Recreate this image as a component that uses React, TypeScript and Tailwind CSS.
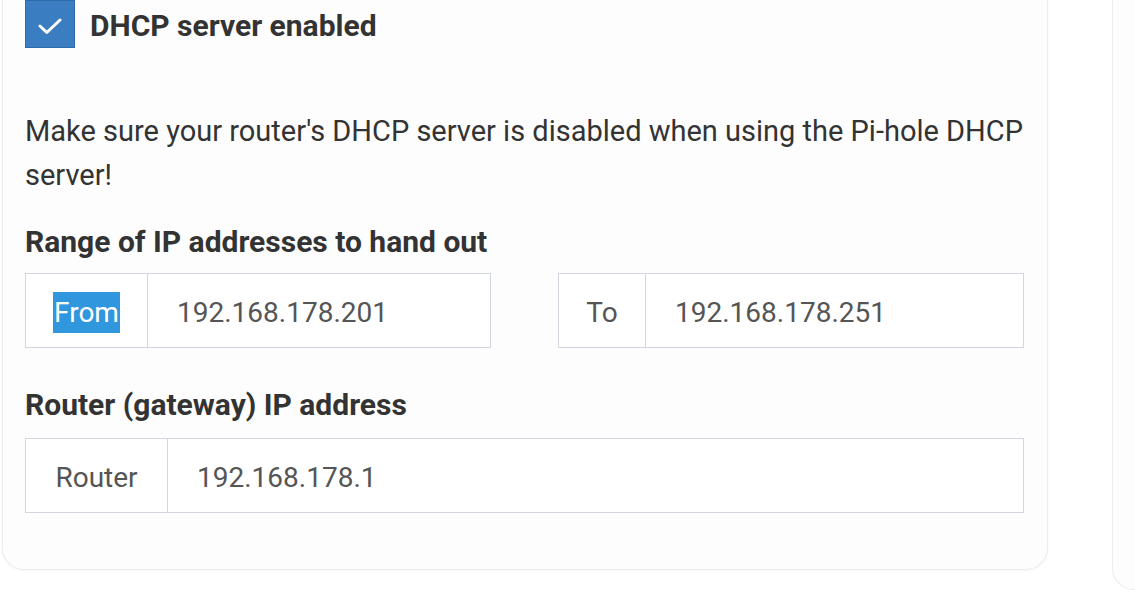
import type { ReactNode } from 'react';

const font = { fontFamily: '"Source Sans Pro", Roboto, "Noto Sans", sans-serif' };

type InputGroupProps = {
  addon: ReactNode;
  addonWidth: string;
  value: string;
  className?: string;
};

function InputGroup({ addon, addonWidth, value, className = '' }: InputGroupProps) {
  return (
    <div className={`flex h-[75px] border border-[#d2d6de] bg-white ${className}`}>
      <span className={`flex shrink-0 items-center justify-center border-r border-[#d2d6de] pt-[4px] text-[28px] text-[#555] ${addonWidth}`}>
        {addon}
      </span>
      <span className="flex flex-1 items-center pl-[29px] pt-[4px] text-[28px] text-[#555]">{value}</span>
    </div>
  );
}

export default function App() {
  return (
    <div className="flex h-[612px] w-[1135px] overflow-hidden bg-white" style={font}>
      <div className="ml-[2px] h-[570px] w-[1046px] shrink-0 rounded-b-[22px] border-x border-b border-[#ececec] bg-[#fdfdfd] pl-[22px] pr-[23px] shadow-[0_1px_3px_rgba(0,0,0,0.04)]">
        <div className="flex h-[47px] items-center gap-[15px]">
          <span className="flex h-[48px] w-[50px] items-center justify-center border border-[#2c6aa8] bg-[#3a7dc0] pt-[6px]">
            <svg width="24" height="17" viewBox="0 0 24 17" fill="none">
              <path d="M2 8 L8.8 14.5 L22 2" stroke="white" strokeWidth="3" strokeLinecap="round" strokeLinejoin="round" />
            </svg>
          </span>
          <span className="pt-[3px] text-[30px] font-bold text-[#333]">DHCP server enabled</span>
        </div>

        <p className="mt-[62px] text-[29px] leading-[44px] text-[#333]">
          Make sure your router's DHCP server is disabled when using the Pi-hole DHCP server!
        </p>

        <h3 className="mt-[23px] text-[30px] font-bold leading-[44px] text-[#333]">Range of IP addresses to hand out</h3>
        <div className="mt-[9px] flex justify-between">
          <InputGroup
            addonWidth="w-[122px]"
            value="192.168.178.201"
            className="w-[466px]"
            addon={<span className="bg-[#3096dd] px-[1px] leading-[41px] text-white">From</span>}
          />
          <InputGroup addonWidth="w-[87px]" value="192.168.178.251" className="w-[466px]" addon="To" />
        </div>

        <h3 className="mt-[35px] text-[30px] font-bold leading-[44px] text-[#333]">Router (gateway) IP address</h3>
        <InputGroup addonWidth="w-[142px]" value="192.168.178.1" className="mt-[11px]" addon="Router" />
      </div>
      <div className="ml-[64px] h-[590px] w-[200px] shrink-0 rounded-bl-[22px] border-b border-l border-[#ececec] bg-[#fdfdfd]" />
    </div>
  );
}
